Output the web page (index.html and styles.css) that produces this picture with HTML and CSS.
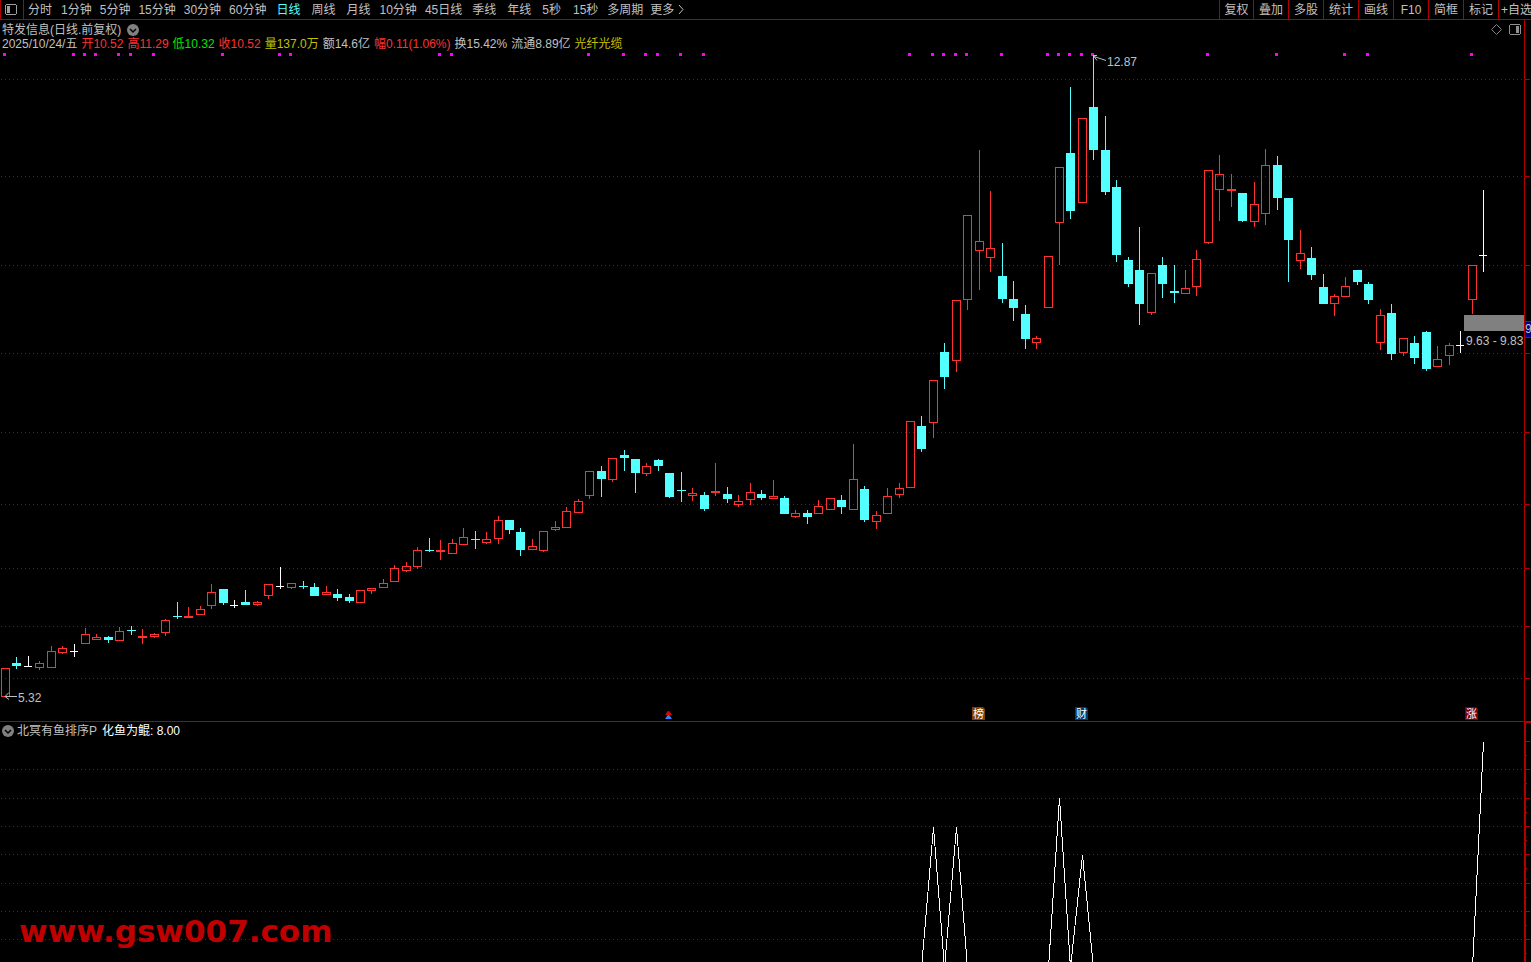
FILE: index.html
```html
<!DOCTYPE html>
<html lang="zh-CN">
<head>
<meta charset="utf-8">
<title>特发信息 日线</title>
<link rel="stylesheet" href="styles.css">
</head>
<body>
<header class="toolbar">
  <button class="sidebar-toggle" aria-label="侧栏">
    <svg width="12" height="11" viewBox="0 0 12 11" shape-rendering="crispEdges"><path d="M1 0h10v1h1v9h-1v1H1v-1H0V1h1zM1 1v9h10V1z" fill="#a0a0a0" fill-rule="evenodd"/><path d="M2 2h3v7H2z" fill="#a0a0a0"/></svg>
  </button>
  <nav class="periods">
    <button>分时</button>
    <button class="minute">1分钟</button>
    <button class="minute">5分钟</button>
    <button class="minute">15分钟</button>
    <button class="minute">30分钟</button>
    <button class="minute">60分钟</button>
    <button class="active">日线</button>
    <button>周线</button>
    <button>月线</button>
    <button class="minute">10分钟</button>
    <button class="minute">45日线</button>
    <button>季线</button>
    <button>年线</button>
    <button class="second">5秒</button>
    <button class="second">15秒</button>
    <button class="multi">多周期</button>
    <button class="more">更多<svg width="6" height="9" viewBox="0 0 6 9"><path d="M1 0l4 4.500-4 4.500" fill="none" stroke="#c0c0c0"/></svg></button>
  </nav>
  <div class="tools">
    <button class="adjust">复权</button>
    <button>叠加</button>
    <button>多股</button>
    <button>统计</button>
    <button>画线</button>
    <button>F10</button>
    <button>简框</button>
    <button>标记</button>
    <button class="favorite">+自选</button>
  </div>
</header>

<main>
  <section class="panel">
    <svg id="price" class="plot" viewBox="0 20 1531 701" role="img" aria-label="日K线图">
      <g id="price-grid"></g>
      <path class="axis" d="M1524 20h1v701h-1z"/>
      <g id="candles"></g>
      <g id="dots"></g>
      <path class="arrow" d="M1093 55.500h4M1094 56.500l12 4M1094 56.500l3 4"/>
      <text class="label" x="1107" y="66">12.87</text>
      <path class="arrow" d="M5 696.500h12M9 692.500l-4 4 4 3"/>
      <text class="label" x="18" y="702">5.32</text>
      <rect x="1464" y="315" width="60" height="16" fill="#808080"/>
      <text class="label" x="1466" y="345">9.63 - 9.83</text>
      <rect x="1525" y="321" width="6" height="17" fill="#000080"/>
      <path class="axis" d="M1525 321h6v1h-6zM1525 337h6v1h-6z"/>
      <text class="label" x="1525" y="333">9</text>
      <path d="M668 711h1l1 1 2 3h-7l2-3z" fill="#e00000"/>
      <path d="M668 715h1l1 1 2 3h-7l2-3z" fill="#3080ff"/>
      <path d="M972 707h11l2 2v11h-13z" fill="#804000"/>
      <text class="badge" x="973" y="718">榜</text>
      <path d="M1075 707h11l2 2v11h-13z" fill="#003c70"/>
      <text class="badge" x="1076" y="718">财</text>
      <path d="M1465 707h11l2 2v11h-13z" fill="#800000"/>
      <text class="badge" x="1466" y="718">涨</text>
    </svg>
    <div class="info">
      <div class="title-row">
        <h1>特发信息(日线.前复权)</h1>
        <button class="fold" aria-label="展开"><svg width="12" height="12" viewBox="0 0 12 12"><circle cx="6" cy="6" r="6" fill="#808080"/><path d="M3 5l3 3 3-3" fill="none" stroke="#000" stroke-width="1.500"/></svg></button>
        <div class="corner">
          <button aria-label="标记点"><svg width="11" height="11" viewBox="0 0 11 11"><path d="M5.500.5l5 5-5 5-5-5z" fill="none" stroke="#808080"/></svg></button>
          <button aria-label="右栏"><svg width="12" height="11" viewBox="0 0 12 11" shape-rendering="crispEdges"><path d="M1 0h10v1h1v9h-1v1H1v-1H0V1h1zM1 1v9h10V1z" fill="#909090" fill-rule="evenodd"/><path d="M7 2h3v7H7z" fill="#909090"/></svg></button>
        </div>
      </div>
      <div class="quote">
        <span>2025/10/24/五</span>
        <span class="up">开10.52</span>
        <span class="up">高11.29</span>
        <span class="down">低10.32</span>
        <span class="up">收10.52</span>
        <span class="volume">量137.0万</span>
        <span>额14.6亿</span>
        <span class="up">幅0.11(1.06%)</span>
        <span>换15.42%</span>
        <span>流通8.89亿</span>
        <span class="volume">光纤光缆</span>
      </div>
    </div>
  </section>

  <section class="panel">
    <svg id="indicator" class="plot" viewBox="0 721 1531 241" role="img" aria-label="副图指标">
      <g id="indicator-grid"></g>
      <path class="axis" d="M0 721h1531v1H0zM1524 722h7v1h-5v239h-2z"/>
      <polyline id="series" fill="none" stroke="#fff" shape-rendering="crispEdges"/>
      <text class="watermark" x="19" y="942">www.gsw007.com</text>
    </svg>
    <div class="info indicator-row">
      <button class="fold" aria-label="展开"><svg width="12" height="12" viewBox="0 0 12 12"><circle cx="6" cy="6" r="6" fill="#808080"/><path d="M3 5l3 3 3-3" fill="none" stroke="#000" stroke-width="1.500"/></svg></button>
      <span>北冥有鱼排序P</span>
      <span class="value">化鱼为鲲: 8.00</span>
    </div>
  </section>
</main>
<script src="chart.js"></script>
</body>
</html>
```
FILE: styles.css
```css
* { box-sizing: border-box; }

body {
  margin: 0;
  background: #000;
  color: #c0c0c0;
  font: 12px/14px "Liberation Sans", "Noto Sans CJK SC", sans-serif;
  overflow: hidden;
}

button {
  display: flex;
  align-items: center;
  margin: 0;
  padding: 0;
  border: 0;
  background: none;
  color: inherit;
  font: inherit;
  white-space: nowrap;
}

.toolbar {
  display: flex;
  height: 20px;
  border-bottom: 1px solid #b00000;
  overflow: hidden;
}

.toolbar button { height: 19px; }

.toolbar .sidebar-toggle {
  width: 24px;
  padding-left: 4px;
  border: solid #b00000;
  border-width: 0 1px;
}

.periods {
  display: flex;
  flex: 1;
  margin-left: -2px;
}

.periods button { padding: 0 5px 0 6px; }
.periods .minute { padding: 0 4px; }
.periods .second { padding: 0 6px; }
.periods .multi { padding: 0 3px; }
.periods .more { gap: 4px; padding: 0 4px; }
.periods .active { color: #54ffff; }

.tools { display: flex; }

.tools button {
  justify-content: center;
  width: 35px;
  border-left: 1px solid #b00000;
}

.tools .adjust { width: 34px; }

.tools .favorite {
  justify-content: flex-start;
  width: 33px;
  padding-left: 2px;
  overflow: hidden;
}

.panel { display: grid; }

.plot,
.info { grid-area: 1 / 1; }

.plot {
  display: block;
  width: 100%;
  height: auto;
}

.info {
  align-self: start;
  z-index: 1;
  padding: 2px 0 0 2px;
}

.title-row {
  display: flex;
  align-items: center;
  gap: 6px;
}

h1 {
  margin: 0;
  padding-top: 1px;
  font-size: 12px;
  font-weight: 400;
}

.corner {
  display: flex;
  gap: 7px;
  margin-left: auto;
  padding-right: 10px;
}

.quote {
  display: flex;
  gap: 4px;
  white-space: nowrap;
}

.up { color: #ff3232; }
.down { color: #00e600; }
.volume { color: #c0c000; }
.value { color: #fff; }

.indicator-row {
  display: flex;
  align-items: center;
  gap: 5px;
}

.indicator-row .fold { margin-right: -2px; }
.indicator-row span { padding-top: 1px; }

.axis { fill: #b00000; }

.grid {
  stroke: #b00000;
  stroke-dasharray: 1 3;
  shape-rendering: crispEdges;
}

.arrow { fill: none; stroke: #c0c0c0; }

.label { fill: #c0c0c0; font-size: 12px; }
.badge { fill: #fff; font-size: 11px; }

.watermark {
  fill: #c00000;
  font: bold 31px "DejaVu Sans", sans-serif;
}
```
FILE: chart.js
```js
const NS = "http://www.w3.org/2000/svg";
const COLORS = { r: "#ff3232", c: "#54ffff", w: "#ffffff" };

// kind, x, high, body top, body bottom, low
const candles = `
r 5 668 668 697 697|c 16 657 663 666 669|w 28 656 666 667 667|r 39 661 663 668 670|r 51 646 651 668 668
r 62 646 648 653 654|w 74 644 651 652 657|r 85 628 634 644 644|r 96 634 637 640 640|c 108 636 637 640 643
r 119 627 631 641 641|c 131 626 630 631 635|r 142 629 636 638 644|r 154 633 634 637 638|r 165 619 620 633 636
c 177 602 616 617 619|r 188 607 616 618 618|r 200 606 609 615 615|r 211 584 592 606 609|c 223 589 589 603 605
w 234 600 605 606 608|c 245 590 602 605 605|r 257 601 602 605 606|r 268 584 584 596 599|w 280 567 586 587 589
r 291 583 583 588 589|c 303 581 586 587 589|c 314 583 587 596 596|r 326 586 592 595 595|c 337 589 594 598 601
c 349 594 597 601 603|r 360 590 590 603 603|r 371 588 588 591 594|r 383 579 583 588 588|r 394 565 568 582 582
r 406 562 566 571 572|r 417 547 550 567 569|c 429 538 550 551 552|r 440 540 550 552 560|r 452 539 543 554 554
r 463 528 537 545 545|c 475 531 539 540 549|r 486 532 539 543 544|r 498 516 520 539 544|c 509 520 520 530 534
c 520 528 532 550 556|r 532 539 546 550 550|r 543 531 531 551 552|r 555 521 527 530 531|r 566 507 511 528 528
r 578 499 501 513 513|r 589 471 471 496 499|c 601 466 471 479 497|r 612 458 458 480 482|c 624 450 455 458 471
c 635 459 459 473 493|r 646 463 466 474 476|c 658 459 460 466 471|c 669 473 473 497 498|c 681 472 490 491 502
r 692 488 493 496 501|c 704 492 495 509 511|r 715 463 491 493 496|c 727 487 494 499 503|r 738 495 501 505 507
r 750 483 492 500 505|c 761 490 494 498 500|r 773 480 496 499 499|c 784 496 498 514 514|r 795 510 513 517 518
c 807 510 513 517 524|r 818 500 506 514 514|r 830 498 498 510 510|c 841 495 500 507 514|r 853 444 479 510 510
c 864 486 489 520 522|r 876 511 515 522 529|r 887 488 496 514 514|r 899 483 488 495 498|r 910 421 421 488 488
c 921 416 426 449 452|r 933 380 380 423 438|c 944 343 352 377 389|r 956 300 300 361 372|r 967 215 215 300 310
r 979 150 241 251 290|r 990 191 248 258 272|c 1002 243 276 299 303|c 1013 281 299 308 321|c 1025 305 314 339 349
r 1036 336 338 343 349|r 1048 256 256 308 308|r 1059 167 167 223 265|c 1070 87 153 211 219|r 1082 118 118 203 203
c 1093 56 107 150 160|c 1105 116 150 192 195|c 1116 180 187 255 262|c 1128 257 260 284 287|c 1139 227 270 304 325
r 1151 273 273 313 315|c 1162 257 265 284 298|c 1174 265 291 293 303|r 1185 270 288 294 294|r 1196 250 259 287 296
r 1208 170 170 243 244|r 1219 155 174 190 221|r 1231 174 189 191 207|c 1242 193 193 221 222|r 1254 182 204 222 227
r 1265 149 165 214 225|c 1277 156 165 198 210|c 1288 198 198 240 282|r 1300 230 253 261 269|c 1311 247 258 275 280
c 1323 274 287 304 304|r 1334 294 296 304 316|r 1345 277 286 297 297|c 1357 270 270 282 285|c 1368 282 284 300 304
r 1380 309 315 343 350|c 1391 304 313 354 360|r 1403 338 338 353 356|c 1414 336 343 358 364|c 1426 331 332 369 371
r 1437 346 359 367 367|r 1449 343 345 356 365|w 1460 331 345 346 353|r 1472 265 265 300 314|w 1483 190 255 256 272
`.trim().split(/[|\n]/).map(row => row.split(" "));

const signalDots = [4, 73, 84, 95, 118, 130, 153, 222, 279, 290, 439, 451, 588, 623, 645, 657, 680, 703,
  909, 932, 943, 955, 966, 1001, 1047, 1058, 1069, 1081, 1092, 1207, 1276, 1344, 1367, 1471];

const signals = { 933: 5, 956: 5, 1059: 6, 1082: 4, 1483: 8 };

function add(id, tag, attrs) {
  const node = document.createElementNS(NS, tag);
  for (const key in attrs) node.setAttribute(key, attrs[key]);
  document.getElementById(id).append(node);
}

function rect(id, x, y, width, height, fill) {
  if (height > 0) add(id, "rect", { x, y, width, height, fill });
}

for (const y of [79, 176, 265, 353, 432, 504, 568, 626, 678]) {
  add("price-grid", "path", { class: "grid", d: `M1 ${y + 0.5}H1524` });
  rect("price-grid", 1525, y, 5, 1, "#b00000");
}

for (const y of [741, 769, 798, 826, 854, 883, 911, 939]) {
  if (y > 741) add("indicator-grid", "path", { class: "grid", d: `M1 ${y + 0.5}H1524` });
  rect("indicator-grid", 1526, y, 4, 1, "#b00000");
  rect("indicator-grid", 1526, y + 14, 1, 1, "#b00000");
}

for (const [kind, ...numbers] of candles) {
  const [x, high, top, bottom, low] = numbers.map(Number);
  const color = COLORS[kind];
  rect("candles", x, high, 1, top - high, color);
  rect("candles", x, bottom, 1, low - bottom, color);
  if (kind === "r" && bottom - top > 2) {
    add("candles", "path", {
      d: `M${x - 4} ${top}h9v${bottom - top}h-9zm1 1v${bottom - top - 2}h7v${top - bottom + 2}z`,
      fill: color,
      "fill-rule": "evenodd"
    });
  } else {
    rect("candles", x - 4, top, kind === "w" ? 8 : 9, bottom - top, color);
  }
}

for (const x of signalDots) rect("dots", x - 1, 53, 3, 3, "#ff00ff");

const points = candles.map(([, x]) => {
  const value = signals[x] || 0;
  return `${Number(x) + 0.5},${Math.round(968 - value * 28.3)}`;
});
document.getElementById("series").setAttribute("points", points.join(" "));
```
